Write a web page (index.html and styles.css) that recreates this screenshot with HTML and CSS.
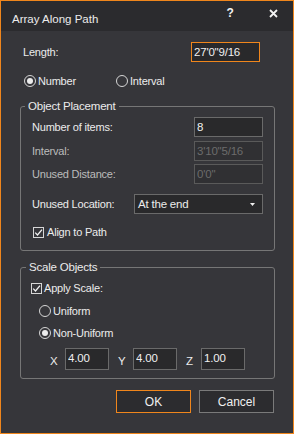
FILE: index.html
```html
<!DOCTYPE html>
<html lang="en">
<head>
    <meta charset="UTF-8">
    <meta name="viewport" content="width=device-width, initial-scale=1.0">
    <title>Array Along Path</title>
    <link rel="stylesheet" href="styles.css">
</head>
<body>
    <div class="dialog">
        <!-- Title bar -->
        <div class="titlebar">
            <span class="title">Array Along Path</span>
            <span class="caption-btn help">?</span>
            <span class="caption-btn close">
                <svg width="9" height="9" viewBox="0 0 9 9">
                    <path d="M1 1 L8 8 M8 1 L1 8" stroke="#f2f2f2" stroke-width="1.8" fill="none"/>
                </svg>
            </span>
        </div>

        <div class="content">
            <div class="row length-row">
                <span class="label">Length:</span>
                <input class="field field-focus" type="text" value="27'0&quot;9/16">
            </div>

            <div class="row mode-row">
                <span class="option option-number"><span class="radio checked"></span>Number</span>
                <span class="option"><span class="radio"></span>Interval</span>
            </div>

            <!-- Object Placement -->
            <fieldset class="group placement">
                <legend>Object Placement</legend>
                <div class="row field-row">
                    <span class="label">Number of items:</span>
                    <input class="field" type="text" value="8">
                </div>
                <div class="row field-row row-gap-4">
                    <span class="label label-dim">Interval:</span>
                    <input class="field field-disabled" type="text" value="3'10&quot;5/16" disabled>
                </div>
                <div class="row field-row row-gap-3">
                    <span class="label label-dim">Unused Distance:</span>
                    <input class="field field-disabled" type="text" value="0'0&quot;" disabled>
                </div>
                <div class="row field-row row-gap-10">
                    <span class="label">Unused Location:</span>
                    <div class="dropdown">
                        <span>At the end</span>
                        <svg width="5" height="3" viewBox="0 0 5 3"><path d="M0 0 H5 L2.5 3 Z" fill="#f0f0f0"/></svg>
                    </div>
                </div>
                <div class="row check-row align-row">
                    <span class="checkbox">
                        <svg width="9" height="9" viewBox="0 0 9 9"><path d="M1.2 4.6 L3.5 7 L8 1.6" stroke="#f2f2f2" stroke-width="1.3" fill="none"/></svg>
                    </span>
                    <span>Align to Path</span>
                </div>
            </fieldset>

            <!-- Scale Objects -->
            <fieldset class="group scale">
                <legend>Scale Objects</legend>
                <div class="row check-row apply-row">
                    <span class="checkbox">
                        <svg width="9" height="9" viewBox="0 0 9 9"><path d="M1.2 4.6 L3.5 7 L8 1.6" stroke="#f2f2f2" stroke-width="1.3" fill="none"/></svg>
                    </span>
                    <span>Apply Scale:</span>
                </div>
                <div class="row sub-option uniform-row">
                    <span class="radio"></span>Uniform
                </div>
                <div class="row sub-option nonuniform-row">
                    <span class="radio checked"></span>Non-Uniform
                </div>
                <div class="row axis-row">
                    <span class="axis">X</span>
                    <input class="field field-axis" type="text" value="4.00">
                    <span class="axis">Y</span>
                    <input class="field field-axis" type="text" value="4.00">
                    <span class="axis">Z</span>
                    <input class="field field-axis" type="text" value="1.00">
                </div>
            </fieldset>

            <div class="row buttons">
                <button class="btn btn-default">OK</button>
                <button class="btn">Cancel</button>
            </div>
        </div>
    </div>
</body>
</html>
```

FILE: styles.css
```css
/* Reset */
* {
    box-sizing: border-box;
    margin: 0;
    padding: 0;
}

body {
    font-family: 'Liberation Sans', Arial, sans-serif;
    font-size: 11px;
    letter-spacing: -0.2px;
    color: #ececec;
    background-color: #36363a;
}

.dialog {
    width: 294px;
    height: 434px;
    border: 1px solid #f0861c;
    background-color: #36363a;
}

/* Title bar */
.titlebar {
    height: 30px;
    display: flex;
    align-items: flex-start;
    background-color: #2b2b2e;
}

.title {
    padding: 11px 0 0 11px;
    font-size: 11.5px;
    line-height: 14px;
    letter-spacing: 0;
    flex: 1;
}

.caption-btn {
    display: flex;
    justify-content: center;
    align-items: center;
    height: 16px;
    margin-top: 4px;
    color: #f2f2f2;
}

.help {
    width: 14px;
    font-weight: bold;
    font-size: 12px;
    margin-right: 29px;
}

.close {
    width: 14px;
    margin-right: 13px;
}

/* Rows */
.row {
    display: flex;
    align-items: center;
}

.label {
    line-height: 14px;
}

.label-dim {
    color: #bcbcbc;
}

.length-row {
    height: 20px;
    margin-top: 11px;
    padding: 0 33px 0 22px;
    justify-content: space-between;
}

.mode-row {
    height: 14px;
    margin-top: 12px;
    padding-left: 23px;
}

.option {
    display: flex;
    align-items: center;
}

.option-number {
    width: 92px;
}

/* Inputs */
.field {
    width: 69px;
    height: 20px;
    padding: 0 2px;
    border: 1px solid #6a6a6a;
    background-color: #29292b;
    color: #f0f0f0;
    font-family: inherit;
    font-size: 11.5px;
    letter-spacing: -0.2px;
    outline: none;
}

.field-focus {
    border-color: #f0861c;
}

.field-disabled {
    color: #6c6c6c;
    background-color: #303033;
    border-color: #5a5a5a;
}

.field-axis {
    width: 44px;
    height: 22px;
    padding-bottom: 3px;
}

.dropdown {
    width: 129px;
    height: 20px;
    display: flex;
    align-items: center;
    justify-content: space-between;
    padding: 0 7px 0 3px;
    border: 1px solid #6a6a6a;
    background-color: #29292b;
    font-size: 11.5px;
}

/* Radio and checkbox */
.radio {
    width: 12px;
    height: 12px;
    margin-right: 2px;
    border: 1px solid #d6d6d6;
    border-radius: 50%;
    display: inline-flex;
    justify-content: center;
    align-items: center;
}

.radio.checked::after {
    content: '';
    width: 6px;
    height: 6px;
    border-radius: 50%;
    background-color: #ececec;
}

.checkbox {
    width: 11px;
    height: 11px;
    border: 1px solid #d6d6d6;
    display: inline-flex;
    justify-content: center;
    align-items: center;
}

.check-row {
    height: 14px;
}

/* Group boxes */
.group {
    width: 255px;
    margin-left: 19px;
    border: 1px solid #767676;
    border-radius: 3px;
    padding: 4px 11px 11px 11px;
}

.group legend {
    margin-left: -7px;
    padding: 0 3px;
    line-height: 14px;
    font-size: 11.5px;
}

.placement {
    margin-top: 11px;
}

.field-row {
    height: 20px;
    justify-content: space-between;
}

.row-gap-4 {
    margin-top: 4px;
}

.row-gap-3 {
    margin-top: 3px;
}

.row-gap-10 {
    margin-top: 10px;
}

.align-row {
    margin-top: 11px;
    padding-left: 1px;
}

.align-row .checkbox {
    margin-right: 3px;
}

.scale {
    margin-top: 9px;
    padding: 7px 11px 8px 11px;
}

.scale legend {
    margin-left: -6px;
}

.apply-row {
    margin-left: -1px;
}

.apply-row .checkbox {
    margin-right: 2px;
}

.sub-option {
    height: 14px;
    padding-left: 7px;
}

.uniform-row {
    margin-top: 9px;
}

.nonuniform-row {
    margin-top: 8px;
}

.axis-row {
    height: 22px;
    margin-top: 8px;
    padding-left: 9px;
}

.axis {
    width: 24px;
    padding: 3px 0 0 9px;
    font-size: 11.5px;
}

/* Buttons */
.buttons {
    margin-top: 11px;
    padding-right: 19px;
    justify-content: flex-end;
    gap: 8px;
}

.btn {
    width: 75px;
    height: 23px;
    border: 1px solid #7a7a7a;
    background-color: #2c2c2f;
    color: #f0f0f0;
    font-family: inherit;
    font-size: 12px;
    letter-spacing: 0;
}

.btn-default {
    border-color: #f0861c;
}
```
